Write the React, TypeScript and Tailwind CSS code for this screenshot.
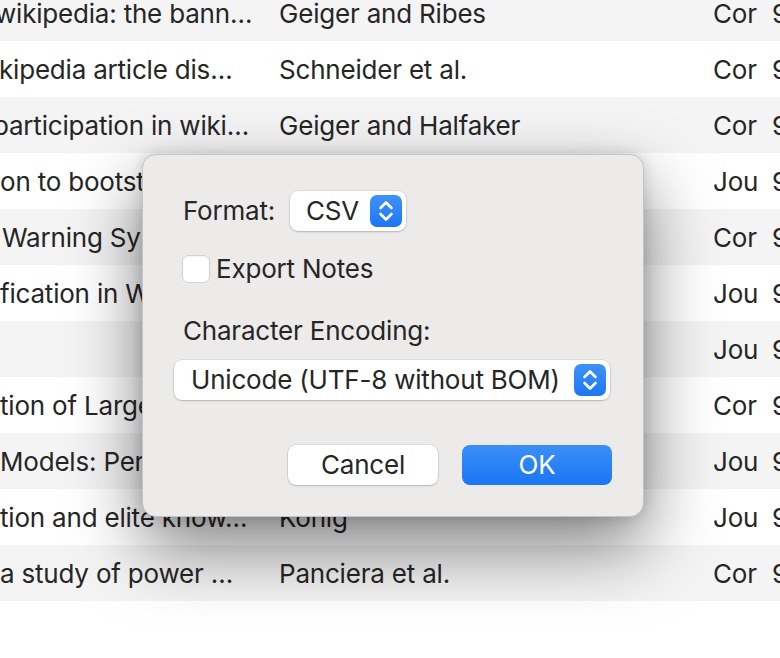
const rows = [
  { title: "wikipedia: the bann…", shift: "-ml-[5px]", author: "Geiger and Ribes", type: "Cor" },
  { title: "kipedia article dis…", shift: "-ml-[1px]", author: "Schneider et al.", type: "Cor" },
  { title: "participation in wiki…", shift: "-ml-[7px]", author: "Geiger and Halfaker", type: "Cor" },
  { title: "on to bootstrapping…", shift: "ml-0", author: "Halfaker et al.", type: "Jou" },
  { title: "Warning System for…", shift: "ml-[2px]", author: "West et al.", type: "Cor" },
  { title: "fication in Wikipedia…", shift: "ml-0", author: "Potthast et al.", type: "Jou" },
  { title: "", shift: "ml-0", author: "", type: "Jou" },
  { title: "tion of Large Scale…", shift: "ml-0", author: "Kittur et al.", type: "Cor" },
  { title: "Models: Performance…", shift: "ml-0", author: "Adler et al.", type: "Jou" },
  { title: "tion and elite know…", shift: "ml-0", author: "König", type: "Jou" },
  { title: "a study of power …", shift: "ml-0", author: "Panciera et al.", type: "Cor" },
];

function Stepper() {
  return (
    <span className="flex h-8 w-8 shrink-0 items-center justify-center rounded-[7px] bg-[linear-gradient(#3f92fb,#1d76f3)]">
      <svg width="16" height="24" viewBox="0 0 16 24" fill="none">
        <path d="M2.5 9 L8 3.5 L13.5 9" stroke="white" strokeWidth="2.6" strokeLinecap="round" strokeLinejoin="round" />
        <path d="M2.5 15 L8 20.5 L13.5 15" stroke="white" strokeWidth="2.6" strokeLinecap="round" strokeLinejoin="round" />
      </svg>
    </span>
  );
}

function Select({ label, className }: { label: string; className: string }) {
  return (
    <div
      className={`flex h-10 items-center justify-between rounded-[8px] bg-white pr-1 shadow-[0_0_0_0.5px_rgba(0,0,0,0.12),0_1px_2px_rgba(0,0,0,0.18)] ${className}`}
    >
      <span>{label}</span>
      <Stepper />
    </div>
  );
}

export default function App() {
  return (
    <div className="relative h-[658px] w-[780px] overflow-hidden bg-white font-['Inter','Liberation_Sans',sans-serif] text-[26px] leading-8 tracking-[-0.2px] text-[#262626]">
      {/* table behind the sheet */}
      <div className="-mt-[15px] flex flex-col">
        {rows.map((r, i) => (
          <div
            key={i}
            className={`flex h-[56px] items-center whitespace-nowrap pt-[2px] ${i % 2 === 0 ? "bg-[#f4f4f4]" : "bg-white"}`}
          >
            <div className="w-[279px] shrink-0 overflow-hidden">
              <span className={`block ${r.shift}`}>{r.title}</span>
            </div>
            <div className="w-[434px] shrink-0 overflow-hidden">{r.author}</div>
            <div className="w-[59px] shrink-0">{r.type}</div>
            <div className="shrink-0">9/1</div>
          </div>
        ))}
      </div>

      {/* export sheet */}
      <div className="absolute left-[142px] top-[154px] flex w-[502px] flex-col rounded-[14px] border border-[#c4c4c4] bg-[#ecebea] px-[31px] pb-[31px] pt-[36px] shadow-[0_30px_70px_rgba(0,0,0,0.5),0_0_14px_rgba(0,0,0,0.15)]">
        <div className="ml-[9px] flex items-center gap-[15px]">
          <span>Format:</span>
          <Select label="CSV" className="w-[116px] pl-4" />
        </div>

        <label className="ml-[8px] mt-6 flex h-7 items-center gap-[6px]">
          <span className="h-7 w-7 rounded-[6px] border border-[#d2d2d2] bg-white shadow-[inset_0_1px_2px_rgba(0,0,0,0.06)]" />
          <span>Export Notes</span>
        </label>

        <p className="ml-[9px] mt-8">Character Encoding:</p>
        <Select label="Unicode (UTF-8 without BOM)" className="mt-[13px] w-[436px] pl-[17px]" />

        <div className="mt-[45px] flex justify-end gap-6">
          <button className="h-10 w-[150px] rounded-[8px] bg-white shadow-[0_0_0_0.5px_rgba(0,0,0,0.12),0_1px_2px_rgba(0,0,0,0.18)]">
            Cancel
          </button>
          <button className="h-10 w-[150px] rounded-[8px] bg-[linear-gradient(#3b8ff9,#1b76f4)] text-white">
            OK
          </button>
        </div>
      </div>
    </div>
  );
}
